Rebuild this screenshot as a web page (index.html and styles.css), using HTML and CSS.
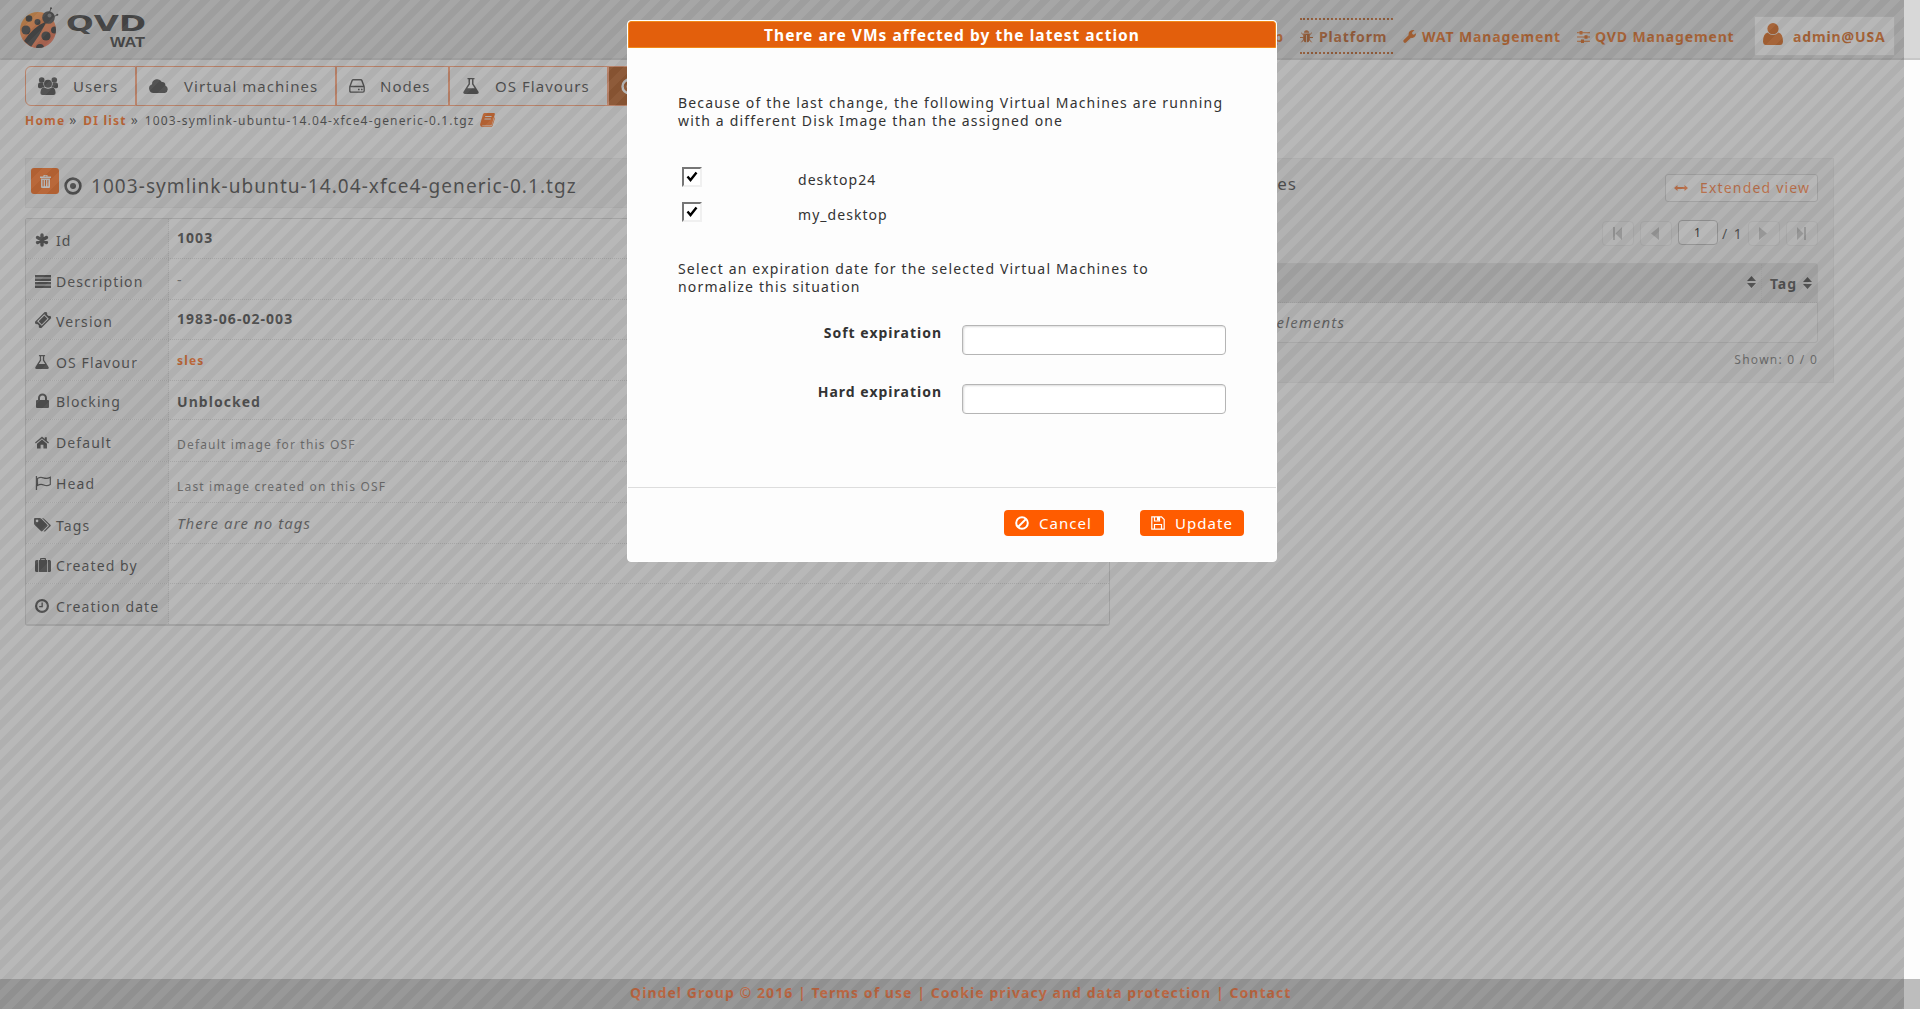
FILE: index.html
```
<!DOCTYPE html>
<html lang="en">
<head>
<meta charset="utf-8">
<title>QVD WAT</title>
<link rel="stylesheet" href="styles.css">
</head>
<body>
<svg class="defs" width="0" height="0">
  <symbol id="users" viewBox="0 0 20 18"><circle cx="3.7" cy="3" r="2.8"/><circle cx="16.3" cy="3" r="2.8"/><path d="M0 8.500Q0 5.600 2 5.600h3.400q-.5 2.700 1.300 4.300Q4 10 3 11.200H1.500Q0 11.200 0 9.800zM20 8.500Q20 5.600 18 5.600h-3.400q.5 2.700-1.300 4.300Q16 10 17 11.200h1.500Q20 11.200 20 9.800z"/><circle cx="10" cy="6.700" r="4"/><path d="M5.800 10.300Q10 13 14.200 10.300 17.400 11 17.600 16q0 2-2.100 2h-11q-2.100 0-2.100-2 .2-5 3.400-5.700z"/></symbol>
  <symbol id="cloud" viewBox="0 0 20 14"><path d="M4.500 14A4.500 4.500 0 0 1 3 5.300 5.200 5.200 0 0 1 12.800 3a3 3 0 0 1 3.500 3.500A4 4 0 0 1 16 14z"/></symbol>
  <symbol id="hdd" viewBox="0 0 16 14"><path fill="none" stroke="currentColor" stroke-width="1.400" d="M.8 7.800 3.200 1.400Q3.500.8 4.200.8h7.600q.7 0 1 .6l2.400 6.400v4q0 1.300-1.300 1.300H2Q.8 13.100.8 11.800zM1 7.500h14"/><path d="M9 9.700h1.600v1.600H9zM12 9.700h1.600v1.600H12z"/></symbol>
  <symbol id="flask" viewBox="0 0 16 16"><path fill-rule="evenodd" d="M4.500 0h7v1.300h-1v4.500l5 8q.8 2.200-1.300 2.200H1.800Q-.3 16 .5 13.800l5-8V1.300h-1zM7 1.300v5L4.300 10.300h7.400L9 6.300v-5z"/></symbol>
  <symbol id="target" viewBox="0 0 18 18"><circle cx="9" cy="9" r="7.400" fill="none" stroke="currentColor" stroke-width="2.600"/><circle cx="9" cy="9" r="3"/></symbol>
  <symbol id="book" viewBox="0 0 15 14"><path fill-rule="evenodd" d="M4.500 0H14q1.200.2.8 1.500L12 11.200q-.5 1.300-1.800 1.300H2.500q-1 .6 0 .8h8.200q1-.2 1.400-1.300l2.700-8.500.1 2-2.300 7.200Q12 14 10.500 14H2Q-.3 13.500.2 11L2.900 1.500Q3.300.2 4.500 0zM5.300 3l-.3 1h6.400l.3-1zM4.600 5.500l-.3 1h6.400l.3-1z"/></symbol>
  <symbol id="trash" viewBox="0 0 11 13"><path fill-rule="evenodd" d="M3.500 0h4v1.600H11V3H0V1.600h3.500zM4.500.8v.8h2V.8zM1 3.500h9V12q0 1-1 1H2q-1 0-1-1zM2.600 5v6.300h1V5zM5 5v6.300h1V5zM7.400 5v6.300h1V5z"/></symbol>
  <symbol id="asterisk" viewBox="0 0 14 14"><path stroke="currentColor" stroke-width="3.400" stroke-linecap="round" d="M7 2v10M2.500 4.500l9 5M11.500 4.500l-9 5"/></symbol>
  <symbol id="lines" viewBox="0 0 16 13"><path d="M0 0h16v2.400H0zM0 3.500h16v2.400H0zM0 7.100h16v2.400H0zM0 10.600h16V13H0z"/></symbol>
  <symbol id="ticket" viewBox="0 0 16 16"><g transform="rotate(-45 8 8)"><path fill-rule="evenodd" d="M0 3.500h16v2.600a2 2 0 0 0 0 3.800v2.600H0V9.900a2 2 0 0 0 0-3.800zM3 4.800v6.400h10V4.800z"/><path d="M4 5.800h8v4.400H4z"/></g></symbol>
  <symbol id="lock" viewBox="0 0 13 15"><path fill-rule="evenodd" d="M1 7h1V5a4.500 4.500 0 0 1 9 0v2h1q1 0 1 1v6q0 1-1 1H1q-1 0-1-1V8q0-1 1-1zM4 7h5V5a2.500 2.500 0 0 0-5 0z"/></symbol>
  <symbol id="home" viewBox="0 0 14 12"><path d="M7 0l2.800 2.400V.7h2v3.500L14 6.100l-.8.9L7 1.900.8 7 0 6.100zM7 3l5 4.200V12H8.400V8.300H5.600V12H2V7.200z"/></symbol>
  <symbol id="flag" viewBox="0 0 16 14"><path d="M.8 0h1.300v14H.8z"/><path fill="none" stroke="currentColor" stroke-width="1.200" d="M2.500 2.400q3-1.800 6-.5 3.500 1.300 6.800-.7V8.500q-3 1.900-6.500.5Q5.500 7.700 2.500 9.500z"/></symbol>
  <symbol id="tags" viewBox="0 0 17 14"><path fill-rule="evenodd" d="M0 1q0-1 1-1h4.800q.8 0 1.500.7l6 6q.8.800 0 1.600L8.500 13q-.8.800-1.600 0L.7 7Q0 6.300 0 5.500zM3 1.600a1.300 1.300 0 1 0 .1 0z"/><path d="M8 0q1.200 0 2 .7l6.400 6q.8.800 0 1.600L11.600 13q-1 1-2 .2l4.700-4.700q1-1 0-2z"/></symbol>
  <symbol id="case" viewBox="0 0 16 14"><path fill-rule="evenodd" d="M5 2V.9Q5 0 5.900 0h4.200q.9 0 .9.900V2h1.300v12H3.700V2zM6.200 1.200V2h3.600v-.8zM0 3.500Q0 2 1.500 2H3v12H1.500Q0 14 0 12.500zM13 2h1.500Q16 2 16 3.500v9q0 1.500-1.500 1.500H13z"/></symbol>
  <symbol id="clock" viewBox="0 0 14 14"><circle cx="7" cy="7" r="5.900" fill="none" stroke="currentColor" stroke-width="2.200"/><path d="M6.500 3.500h1.300v4.800H4.200V7h2.300z"/></symbol>
  <symbol id="bug" viewBox="0 0 13 13"><path d="M4 2.800a2.500 2.500 0 0 1 5 0zM3.200 3.400h6.600v6q-.5 2.600-2.900 2.800V5h-.8v7.200Q3.700 12 3.200 9.400z"/><path fill="none" stroke="currentColor" d="M3.500 5 1.200 2.800M9.500 5l2.300-2.200M3.500 7.500H0M9.500 7.500H13M3.800 9.500l-2.400 2.800M9.200 9.500l2.400 2.800"/></symbol>
  <symbol id="wrench" viewBox="0 0 13 13"><path d="M.5 10.200 5.600 5.200Q5.200 1.600 8.500.3q1.600-.6 3 0L9.200 2.200v1.900l1.600.6L13 3.300q0 3.700-3 4.500-1 .2-2-.1l-5 4.800q-1 .9-2 0t-.5-2.300z"/></symbol>
  <symbol id="sliders" viewBox="0 0 13 12"><path d="M0 1.200h13v1H0zM0 5.500h13v1H0zM0 9.800h13v1H0zM2.500 0h3v3.400h-3zM7.500 4.300h3v3.400h-3zM4 8.600h3V12H4z"/></symbol>
  <symbol id="user" viewBox="0 0 20 22"><circle cx="10" cy="5.700" r="5.600"/><path d="M4.500 9.500Q10 14.500 15.500 9.500 19.800 10.500 20 18.500q-.3 3.500-3 3.500H3q-2.700 0-3-3.500Q.2 10.500 4.500 9.500z"/></symbol>
  <symbol id="arrows" viewBox="0 0 14 6"><path d="M0 3l3.500-3v2h7V0L14 3l-3.500 3V4h-7v2z"/></symbol>
  <symbol id="first" viewBox="0 0 9 13"><path d="M0 0h2v13H0zM9 0v13L2.500 6.500z"/></symbol>
  <symbol id="prev" viewBox="0 0 8 13"><path d="M8 0v13L0 6.500z"/></symbol>
  <symbol id="next" viewBox="0 0 8 13"><path d="M0 0v13l8-6.500z"/></symbol>
  <symbol id="last" viewBox="0 0 9 13"><path d="M7 0h2v13H7zM0 0v13l6.500-6.500z"/></symbol>
  <symbol id="sort" viewBox="0 0 9 12"><path d="M0 5 4.500 0 9 5zM0 7h9L4.500 12z"/></symbol>
  <symbol id="ban" viewBox="0 0 14 14"><circle cx="7" cy="7" r="5.800" fill="none" stroke="currentColor" stroke-width="2"/><path stroke="currentColor" stroke-width="2" d="M3 11l8-8"/></symbol>
  <symbol id="save" viewBox="0 0 14 14"><path fill="none" stroke="currentColor" stroke-width="1.200" d="M.8.800h9.700l2.700 2.700v9.700H.8zM3.500 13V8.500h7V13M3.500 1v4h5V1"/><path d="M6 1h2.500v3.500H6z"/></symbol>
</svg>

<header class="top">
  <div class="logo">
    <svg class="beetle" viewBox="0 0 40 42">
      <defs><linearGradient id="shell" x1="0" y1="0" x2=".7" y2="1"><stop offset="0" stop-color="#ffa52a"/><stop offset=".4" stop-color="#f3782b"/><stop offset="1" stop-color="#e0583c"/></linearGradient>
      <clipPath id="round"><circle cx="18" cy="23" r="18"/></clipPath></defs>
      <path d="M29 7 31 1M33 10l4-2" stroke="#333" fill="none"/><circle cx="31" cy="1.200" r="1"/><circle cx="37.300" cy="7.800" r="1"/>
      <circle cx="18" cy="23" r="18" fill="url(#shell)"/>
      <g clip-path="url(#round)" fill="#202020"><path d="M27 14Q13 20 4 34l7 6Q20 28 27 14z"/><circle cx="9" cy="11.500" r="3.300"/><circle cx="17.500" cy="15" r="3"/><circle cx="6" cy="23" r="4.500"/><circle cx="26" cy="29" r="4.600"/><circle cx="34.500" cy="23" r="3.500"/><circle cx="20" cy="41" r="4"/></g>
      <circle cx="28.500" cy="10.500" r="6.300" fill="#2d2d2d"/><circle cx="29.500" cy="8.500" r="2" fill="#777"/>
    </svg>
    <svg class="wordmark" viewBox="0 0 80 43">
      <text x="-1" y="24" class="qvd" textLength="80" lengthAdjust="spacingAndGlyphs">QVD</text>
      <text x="43" y="40" class="wat" textLength="35" lengthAdjust="spacingAndGlyphs">WAT</text>
    </svg>
  </div>
  <nav class="menu">
    <a class="help">Help</a>
    <a class="on"><svg width="13" height="13"><use href="#bug"/></svg>Platform</a>
    <a class="wat-m"><svg width="13" height="13"><use href="#wrench"/></svg>WAT Management</a>
    <a class="qvd-m"><svg width="13" height="12"><use href="#sliders"/></svg>QVD Management</a>
    <a class="account"><svg width="20" height="22"><use href="#user"/></svg>admin@USA</a>
  </nav>
</header>

<nav class="tabs">
  <a class="t1"><svg width="20" height="18"><use href="#users"/></svg>Users</a>
  <a class="t2"><svg width="20" height="14"><use href="#cloud"/></svg>Virtual machines</a>
  <a class="t3"><svg width="16" height="14"><use href="#hdd"/></svg>Nodes</a>
  <a class="t4"><svg width="16" height="16"><use href="#flask"/></svg>OS Flavours</a>
  <a class="t5"><svg width="17" height="17"><use href="#target"/></svg>Disk images</a>
</nav>
<div class="crumbs"><b>Home</b><i>»</i><b>DI list</b><i>»</i><span>1003-symlink-ubuntu-14.04-xfce4-generic-0.1.tgz</span><svg width="15" height="14"><use href="#book"/></svg></div>

<main class="columns">
  <section class="details">
    <div class="title"><span class="del"><svg width="11" height="13"><use href="#trash"/></svg></span><svg width="18" height="18"><use href="#target"/></svg><h1>1003-symlink-ubuntu-14.04-xfce4-generic-0.1.tgz</h1></div>
    <div class="props">
      <div class="row h40"><div class="k"><svg width="14" height="14"><use href="#asterisk"/></svg>Id</div><div class="v"><b>1003</b></div></div>
      <div class="row h41"><div class="k"><svg width="16" height="13"><use href="#lines"/></svg>Description</div><div class="v dash">-</div></div>
      <div class="row h40"><div class="k"><svg width="16" height="16"><use href="#ticket"/></svg>Version</div><div class="v"><b>1983-06-02-003</b></div></div>
      <div class="row h41"><div class="k"><svg width="14" height="14"><use href="#flask"/></svg>OS Flavour</div><div class="v link">sles</div></div>
      <div class="row h39"><div class="k"><svg width="13" height="15"><use href="#lock"/></svg>Blocking</div><div class="v low"><b>Unblocked</b></div></div>
      <div class="row h42"><div class="k up"><svg width="14" height="13"><use href="#home"/></svg>Default</div><div class="v small">Default image for this OSF</div></div>
      <div class="row h41"><div class="k up"><svg width="16" height="14"><use href="#flag"/></svg>Head</div><div class="v small lower">Last image created on this OSF</div></div>
      <div class="row h41"><div class="k"><svg class="wide" width="17" height="14"><use href="#tags"/></svg>Tags</div><div class="v none">There are no tags</div></div>
      <div class="row h40"><div class="k"><svg width="16" height="14"><use href="#case"/></svg>Created by</div><div class="v"></div></div>
      <div class="row h40"><div class="k"><svg width="14" height="14"><use href="#clock"/></svg>Creation date</div><div class="v"></div></div>
    </div>
  </section>
  <section class="side">
    <div class="side-head"><h2>Virtual machines</h2><a class="ext"><svg width="14" height="6"><use href="#arrows"/></svg>Extended view</a></div>
    <div class="pager"><span class="pg"><svg width="9" height="13"><use href="#first"/></svg></span><span class="pg"><svg width="8" height="13"><use href="#prev"/></svg></span><span class="cur">1</span><span class="of">/ 1</span><span class="pg"><svg width="8" height="13"><use href="#next"/></svg></span><span class="pg"><svg width="9" height="13"><use href="#last"/></svg></span></div>
    <div class="list">
      <div class="list-head"><div class="c1"><svg width="9" height="12"><use href="#sort"/></svg></div><div class="c2">Tag<svg width="9" height="12"><use href="#sort"/></svg></div></div>
      <div class="empty"><span>There are no elements</span></div>
    </div>
    <div class="shown">Shown: 0 / 0</div>
  </section>
</main>

<footer class="foot">Qindel Group © 2016 | Terms of use | Cookie privacy and data protection | Contact</footer>

<div class="overlay"></div>
<div class="dialog">
  <div class="bar">There are VMs affected by the latest action</div>
  <div class="body">
    <p>Because of the last change, the following Virtual Machines are running with a different Disk Image than the assigned one</p>
    <div class="checks">
      <label><span class="box"><svg viewBox="0 0 12 12" width="12" height="12"><path d="M1.500 5.500 4.500 9 10.500 1.500" fill="none" stroke="#000" stroke-width="2.400"/></svg></span>desktop24</label>
      <label><span class="box"><svg viewBox="0 0 12 12" width="12" height="12"><path d="M1.500 5.500 4.500 9 10.500 1.500" fill="none" stroke="#000" stroke-width="2.400"/></svg></span>my_desktop</label>
    </div>
    <p>Select an expiration date for the selected Virtual Machines to normalize this situation</p>
    <div class="fields">
      <div class="field"><b>Soft expiration</b><input type="text"></div>
      <div class="field"><b>Hard expiration</b><input type="text"></div>
    </div>
  </div>
  <div class="buttons"><span class="btn cancel"><svg width="14" height="14"><use href="#ban"/></svg>Cancel</span><span class="btn update"><svg width="14" height="14"><use href="#save"/></svg>Update</span></div>
</div>
</body>
</html>
```
FILE: styles.css
```
* { box-sizing: border-box; }
body { margin: 0; width: 1920px; height: 1009px; overflow: hidden; position: relative; display: flex; flex-direction: column; background: #fdfdfd; color: #333; font: 14px/20px "Noto Sans", sans-serif; letter-spacing: 1.1px; }
svg { fill: currentColor; flex: none; }
.defs { position: absolute; }
h1, h2, p { margin: 0; font-weight: 400; }

.top { height: 60px; flex: none; background: #d8d8d8; border-bottom: 2px solid #c8c8c8; display: flex; justify-content: space-between; padding: 0 25px 0 20px; }
.logo { display: flex; gap: 7px; padding-top: 7px; color: #222; }
.beetle { width: 40px; height: 42px; }
.wordmark { width: 80px; height: 43px; }
.qvd { font: bold 21px "DejaVu Sans", sans-serif; letter-spacing: 0; }
.wat { font: bold 14px "Liberation Sans", sans-serif; letter-spacing: 0; }
.menu { display: flex; align-items: flex-start; color: #d85700; font-weight: 700; letter-spacing: .87px; white-space: nowrap; }
.menu a { display: flex; align-items: center; gap: 6px; height: 36px; margin-top: 18px; padding-top: 2px; }
.menu svg { margin-top: -1px; }
.help { margin-right: 16px; }
.menu .on { width: 93px; color: #b54c0a; border-top: 2px dotted #b54c0a; border-bottom: 2px dotted #b54c0a; }
.wat-m { width: 174px; margin-left: 10px; }
.menu .qvd-m { width: 177px; gap: 5px; }
.menu .account { width: 141px; height: 40px; margin-top: 16px; padding-left: 8px; gap: 10px; border: 1px solid #ddd; background: #fafafa; }
.menu .account svg { margin-top: -6px; }

.tabs { display: flex; flex: none; height: 40px; margin: 6px 0 0 25px; font-size: 15px; letter-spacing: 1.04px; }
.tabs a { display: flex; align-items: center; border: 1px solid #ff9564; padding-left: 12px; }
.tabs .t1 { width: 111px; border-radius: 6px 0 0 6px; gap: 15px; }
.tabs .t2 { width: 200px; gap: 15px; }
.tabs .t3 { width: 113px; gap: 15px; }
.tabs .t4 { width: 159px; padding-left: 13px; gap: 16px; }
.tabs .t5 { width: 160px; gap: 15px; color: #fff; background: #a84300; }
.crumbs { display: flex; align-items: center; flex: none; height: 20px; margin: 5px 0 0 25px; font-size: 12px; }
.crumbs b { color: #ff5c00; letter-spacing: 1.2px; }
.crumbs i { font-style: normal; font-size: 14px; width: 18px; padding-left: 4px; margin-top: -2px; }
.crumbs svg { margin: -2px 0 0 5px; color: #ff5c00; }
.crumbs span { letter-spacing: 1.16px; }

.columns { display: flex; align-items: flex-start; gap: 24px; flex: 1; padding: 27px 0 0 25px; }
.details { width: 1085px; }
.title { display: flex; align-items: center; height: 50px; padding: 5px 6px 0; background: #f1f1f1; border: 1px solid #e8e8e8; border-right-color: #eaeaea; }
.del { width: 28px; height: 26px; margin: -9px 5px 0 -1px; border-radius: 3px; background: #ff5c00; color: #fff; display: flex; align-items: center; justify-content: center; }
.title h1 { font-size: 19px; line-height: 26px; letter-spacing: 1.06px; margin: 0 0 0 9px; }
.props { margin-top: 10px; border: 1px solid #d2d2d2; border-bottom-width: 2px; border-radius: 3px; }
.row { display: flex; border-bottom: 1px dotted #d6d6d6; }
.row:last-child { border-bottom: 0; }
.h39 { height: 39px; } .h40 { height: 40px; } .h41 { height: 41px; } .h42 { height: 42px; }
.k { width: 143px; display: flex; align-items: flex-end; padding: 0 0 7px 9px; background: #f1f1f1; border-right: 1px dotted #d6d6d6; }
.up { padding-bottom: 8px; }
.k svg { margin: 0 5px 4px 0; }
.k svg[width="14"] { margin-right: 7px; }
.k svg[width="13"] { margin-left: 1px; margin-right: 7px; }
.k .wide { margin-left: -1px; }
.v { flex: 1; display: flex; align-items: flex-end; padding: 0 0 10px 8px; letter-spacing: 1.05px; }
.low { padding-bottom: 7px; }
.dash { padding-bottom: 9px; color: #666; }
.link { font-size: 12px; font-weight: 700; color: #ff5c00; letter-spacing: 1.2px; padding-bottom: 9px; }
.small { font-size: 12px; color: #666; letter-spacing: 1.18px; padding-bottom: 6px; }
.lower { padding-bottom: 5px; }
.none { font-size: 15px; font-style: italic; color: #555; letter-spacing: 1.06px; padding-bottom: 10px; }

.side { width: 700px; height: 225px; padding: 0 15px 0 20px; background: #f1f1f1; border: 1px solid #e8e8e8; }
.side-head { display: flex; justify-content: space-between; padding-top: 15px; height: 60px; }
.side h2 { font-size: 17px; line-height: 20px; letter-spacing: 1px; width: 142px; white-space: nowrap; display: flex; justify-content: flex-end; }
.ext { display: flex; align-items: center; gap: 12px; width: 153px; height: 28px; padding-left: 8px; border: 1px solid #cfcfcf; border-radius: 3px; background: #fafafa; color: #ff7029; letter-spacing: 1.18px; }
.pager { display: flex; height: 44px; align-items: flex-start; justify-content: flex-end; gap: 6px; padding-top: 1px; }
.pg { width: 32px; height: 25px; margin-top: 1px; border: 1px solid #e2e2e2; border-radius: 4px; background: #f5f5f5; color: #bbb; display: flex; align-items: center; padding-left: 10px; }
.cur { width: 40px; height: 25px; line-height: 23px; font-size: 12px; text-align: center; border: 1px solid #b4b4b4; border-radius: 4px; background: #fdfdfd; color: #000; }
.of { width: 19px; margin: 0 1px 0 -2px; line-height: 27px; white-space: nowrap; letter-spacing: 1.4px; }
.list { border: 1px solid #dadada; border-radius: 3px; background: #f4f4f4; height: 80px; }
.list-head { display: flex; height: 39px; background: #d8d8d8; border-bottom: 1px dotted #c5c5c5; font-weight: 700; letter-spacing: .9px; }
.c1 { flex: 1; display: flex; justify-content: flex-end; align-items: center; padding-right: 5px; border-right: 1px dotted #ccc; }
.c2 { width: 55px; display: flex; align-items: center; justify-content: space-between; padding: 1px 5px 0 8px; line-height: 14px; }
.c1 svg, .c2 svg { margin-bottom: 2px; }
.empty { width: 189px; display: flex; justify-content: flex-end; padding-top: 9px; white-space: nowrap; font-size: 15px; font-style: italic; color: #555; }
.shown { text-align: right; font-size: 12px; color: #666; margin-top: 7px; letter-spacing: 1.25px; }

.foot { height: 30px; flex: none; background: #bdbdbd; color: #ff5c14; font-weight: 700; line-height: 27px; letter-spacing: 1.06px; padding-left: 630px; white-space: nowrap; }

.overlay { position: absolute; left: 0; top: 0; width: 1904px; height: 1009px; opacity: .5; background: linear-gradient(135deg, #737373 2.5%, #636363 2.5% 26%, #737373 26% 52.5%, #636363 52.5% 76%, #737373 76%) 0 0 / 20px 20px; }

.dialog { position: absolute; left: 627px; top: 20px; width: 650px; height: 542px; display: flex; flex-direction: column; background: #fdfdfd; border: 1px solid #fff; border-radius: 4px; overflow: hidden; }
.bar { height: 27px; flex: none; border: 1px solid #f08a1a; border-radius: 3px 3px 0 0; background: #e35f0c; color: #fff; text-align: center; font-size: 15.500px; font-weight: 700; line-height: 26px; letter-spacing: 1.03px; }
.body { flex: 1; padding: 46px 50px 0; line-height: 18px; letter-spacing: 1.17px; }
.body p { margin-right: -6px; }
.body .checks + p { margin-right: 50px; }
.checks { padding: 37px 0 0 4px; height: 130px; letter-spacing: 1.05px; }
.checks label { display: flex; align-items: flex-start; height: 35px; line-height: 25px; }
.box { width: 20px; height: 20px; margin-right: 96px; border: 2px solid; border-color: #767676 #f0f0f0 #f0f0f0 #767676; background: #fff; display: flex; align-items: center; justify-content: center; }
.fields { padding-top: 28px; }
.field { display: flex; justify-content: flex-end; height: 59px; }
.field b { letter-spacing: 1px; margin-right: 20px; }
.field input { width: 264px; height: 30px; margin-top: 1px; border: 1px solid #b5b5b5; border-radius: 4px; background: #fff; box-shadow: inset 1px 1px 2px #ddd; }
.buttons { height: 74px; flex: none; border-top: 1px solid #ddd; padding: 22px 32px 0 0; display: flex; justify-content: flex-end; gap: 36px; }
.btn { height: 26px; border-radius: 4px; background: #ff5c00; color: #fff; font-size: 15px; display: flex; align-items: center; gap: 10px; padding-left: 11px; padding-bottom: 1px; letter-spacing: 1.04px; }
.cancel { width: 100px; } .update { width: 104px; }
```
